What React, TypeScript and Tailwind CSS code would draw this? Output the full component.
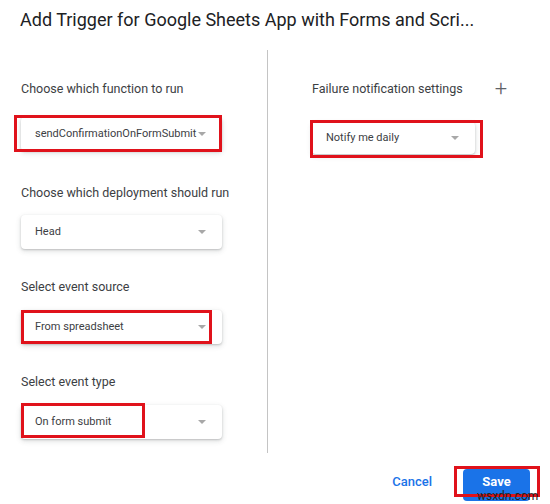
const Caret = () => (
  <svg width="8" height="4" viewBox="0 0 8 4" className="shrink-0">
    <path d="M0 0 L8 0 L4 4 Z" fill="#a8a8a8" />
  </svg>
);

type SelectBoxProps = Readonly<{
  value: string;
  width: string;
  height?: string;
  mark?: string;
}>;

const SelectBox = ({ value, width, height = 'h-[34px]', mark }: SelectBoxProps) => (
  <div className={`relative ${width} ${height} flex items-center justify-between pl-[14px] pr-[16px] bg-white rounded-[4px] shadow-[0_1px_2px_rgba(60,64,67,0.25),0_2px_5px_1px_rgba(60,64,67,0.12)]`}>
    <span className="text-[11px] text-[#3c4043] whitespace-nowrap">{value}</span>
    <Caret />
    {mark && <div className={`absolute border-[3px] border-[#e0121b] ${mark}`}></div>}
  </div>
);

const Label = ({ children }: { children: string }) => (
  <div className="text-[12.5px] leading-[16px] text-[#3c4043] whitespace-nowrap">{children}</div>
);

export default function App() {
  return (
    <div className="w-[550px] h-[504px] bg-white relative overflow-hidden font-['Roboto',sans-serif]">
      <div className="pl-[20px] pt-[9px] text-[18px] leading-[22px] text-[#202124] whitespace-nowrap">
        Add Trigger for Google Sheets App with Forms and Scri...
      </div>

      <div className="mt-[19px] h-[403px] flex">
        <div className="w-[267px] pl-[21px] pt-[31px] flex flex-col">
          <Label>Choose which function to run</Label>
          <div className="mt-[20px]">
            <SelectBox value="sendConfirmationOnFormSubmit" width="w-[201px]" mark="-left-[7px] -top-[2px] w-[208px] h-[37px]" />
          </div>

          <div className="mt-[34px]">
            <Label>Choose which deployment should run</Label>
          </div>
          <div className="mt-[14px]">
            <SelectBox value="Head" width="w-[201px]" />
          </div>

          <div className="mt-[30px]">
            <Label>Select event source</Label>
          </div>
          <div className="mt-[15px]">
            <SelectBox value="From spreadsheet" width="w-[201px]" mark="left-0 top-0 w-[191px] h-[34px]" />
          </div>

          <div className="mt-[30px]">
            <Label>Select event type</Label>
          </div>
          <div className="mt-[15px]">
            <SelectBox value="On form submit" width="w-[201px]" mark="left-0 -top-[2px] w-[124px] h-[35px]" />
          </div>
        </div>

        <div className="w-px bg-[#c4c4c4]"></div>

        <div className="pl-[44px] pt-[31px] flex flex-col">
          <div className="flex items-center">
            <Label>Failure notification settings</Label>
            <span className="ml-[32px] text-[22px] leading-[16px] font-light text-[#5f6368]">+</span>
          </div>
          <div className="mt-[25px]">
            <SelectBox value="Notify me daily" width="w-[163px]" height="h-[32px]" mark="-left-[2px] -top-[2px] w-[173px] h-[38px]" />
          </div>
        </div>
      </div>

      <div className="mt-[16px] h-[32px] flex items-center justify-end pr-[20px]">
        <button className="px-[16px] h-[32px] pb-[6px] text-[13px] font-medium text-[#1a73e8]">Cancel</button>
        <div className="relative ml-[15px]">
          <button className="w-[67px] h-[32px] pb-[6px] rounded-[4px] bg-[#1a73e8] text-[13px] font-bold text-white">Save</button>
          <div className="absolute -left-[9px] -top-[3px] w-[86px] h-[31px] border-[3px] border-[#e0121b]"></div>
          <div className="absolute left-[14px] top-[20px] text-[12px] leading-[14px] text-[#222] whitespace-nowrap">wsxdn.com</div>
        </div>
      </div>
    </div>
  );
}
